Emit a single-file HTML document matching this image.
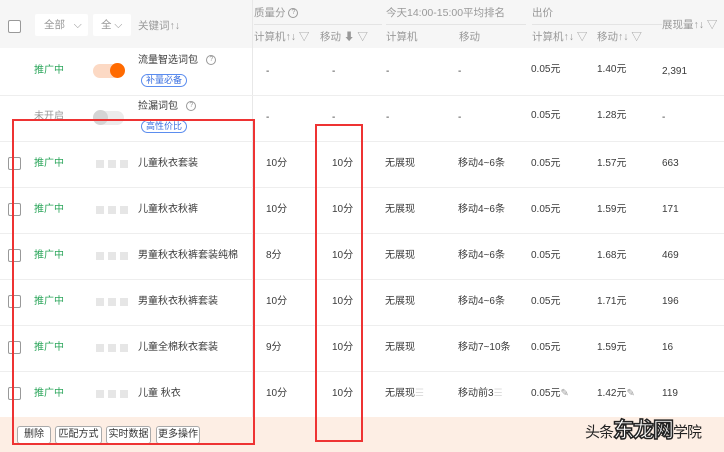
<!DOCTYPE html>
<html><head><meta charset="utf-8"><style>
*{margin:0;padding:0;box-sizing:border-box}
body{width:724px;height:452px;overflow:hidden;background:#fff;font-family:"Liberation Sans","Noto Sans CJK SC",sans-serif;font-size:10px;color:#3a3a3a;position:relative}
.a{position:absolute;white-space:nowrap;line-height:14px}
.g{color:#999}
.h{font-size:10.5px}
.gr{color:#2aa55a}
.hl{position:absolute;left:0;width:724px;height:1px;background:#eee}
.cb{position:absolute;width:13px;height:13px;border:1px solid #999;border-radius:2px;background:#fff}
.sq{position:absolute;width:8px;height:8px;background:#e6e6e6}
.tag{position:absolute;height:13px;border:1px solid #5b8def;border-radius:7px;color:#3a6fe0;font-size:9px;line-height:11px;padding:0 4px}
.btn{position:absolute;top:426px;height:18px;border:1px solid #aaa;border-radius:3px;background:#fff;font-size:10px;line-height:16px;text-align:center;color:#333}
.q{display:inline-block;width:10px;height:10px;border:1px solid #999;border-radius:50%;font-size:7px;line-height:8px;text-align:center;color:#999;vertical-align:middle}
.rb{position:absolute;border:2px solid #ee3333}
</style></head><body>
<div style="position:absolute;left:0;top:0;width:724px;height:48px;background:#f6f6f6"></div>
<div style="position:absolute;left:252px;top:0;width:1px;height:452px;background:#e8e8e8"></div>
<div style="position:absolute;left:254px;top:24px;width:128px;height:1px;background:#e4e4e4"></div>
<div style="position:absolute;left:386px;top:24px;width:140px;height:1px;background:#e4e4e4"></div>
<div style="position:absolute;left:532px;top:24px;width:130px;height:1px;background:#e4e4e4"></div>

<div class="cb" style="left:8px;top:20px;width:13px;height:13px"></div>
<div style="position:absolute;left:35px;top:14px;width:53px;height:22px;background:#fff;border-radius:2px"></div>
<div class="a g h" style="left:44px;top:18px">全部 &nbsp;&nbsp;⌵</div>
<div style="position:absolute;left:93px;top:14px;width:38px;height:22px;background:#fff;border-radius:2px"></div>
<div class="a g h" style="left:101px;top:18px">全 ⌵</div>
<div class="a g h" style="left:138px;top:19px">关键词↑↓</div>
<div class="a g h" style="left:254px;top:6px">质量分 <span class="q">?</span></div>
<div class="a g h" style="left:254px;top:30px">计算机↑↓ ▽</div>
<div class="a g h" style="left:320px;top:30px">移动 ⬇ ▽</div>
<div class="a g h" style="left:386px;top:6px">今天14:00-15:00平均排名</div>
<div class="a g h" style="left:386px;top:30px">计算机</div>
<div class="a g h" style="left:459px;top:30px">移动</div>
<div class="a g h" style="left:532px;top:6px">出价</div>
<div class="a g h" style="left:532px;top:30px">计算机↑↓ ▽</div>
<div class="a g h" style="left:597px;top:30px">移动↑↓ ▽</div>
<div class="a g h" style="left:662px;top:18px">展现量↑↓ ▽</div>

<!-- row 1 -->
<div class="a gr" style="left:34px;top:64px">推广中</div>
<div style="position:absolute;left:93px;top:64px;width:31px;height:14px;border-radius:7px;background:#fcd9c4"></div>
<div style="position:absolute;left:110px;top:63px;width:15px;height:15px;border-radius:50%;background:#ff6a00"></div>
<div class="a" style="left:138px;top:54px">流量智选词包 &nbsp;&nbsp;<span class="q">?</span></div>
<div class="tag" style="left:141px;top:74px">补量必备</div>
<div class="a" style="left:266px;top:65px">-</div><div class="a" style="left:332px;top:65px">-</div>
<div class="a" style="left:386px;top:65px">-</div><div class="a" style="left:458px;top:65px">-</div>
<div class="a" style="left:531px;top:63px">0.05元</div><div class="a" style="left:597px;top:63px">1.40元</div><div class="a" style="left:662px;top:65px">2,391</div>
<div class="hl" style="top:95px"></div>
<!-- row 2 -->
<div class="a g" style="left:34px;top:110px">未开启</div>
<div style="position:absolute;left:93px;top:111px;width:31px;height:14px;border-radius:7px;background:#ececec"></div>
<div style="position:absolute;left:93px;top:110px;width:15px;height:15px;border-radius:50%;background:#d4d4d4"></div>
<div class="a" style="left:138px;top:100px">捡漏词包 &nbsp;&nbsp;<span class="q">?</span></div>
<div class="tag" style="left:141px;top:120px">高性价比</div>
<div class="a" style="left:266px;top:111px">-</div><div class="a" style="left:332px;top:111px">-</div>
<div class="a" style="left:386px;top:111px">-</div><div class="a" style="left:458px;top:111px">-</div>
<div class="a" style="left:531px;top:109px">0.05元</div><div class="a" style="left:597px;top:109px">1.28元</div><div class="a" style="left:662px;top:111px">-</div>
<div class="hl" style="top:141px"></div>

<div class="cb" style="left:8px;top:157px"></div><div class="a gr" style="left:34px;top:157px">推广中</div>
<div class="sq" style="left:96px;top:160px"></div><div class="sq" style="left:108px;top:160px"></div><div class="sq" style="left:120px;top:160px"></div>
<div class="a" style="left:138px;top:157px">儿童秋衣套装</div><div class="a" style="left:266px;top:157px">10分</div><div class="a" style="left:332px;top:157px">10分</div>
<div class="a" style="left:385px;top:157px">无展现</div><div class="a" style="left:458px;top:157px">移动4~6条</div><div class="a" style="left:531px;top:157px">0.05元</div><div class="a" style="left:597px;top:157px">1.57元</div><div class="a" style="left:662px;top:157px">663</div>
<div class="hl" style="top:187px"></div>

<div class="cb" style="left:8px;top:203px"></div><div class="a gr" style="left:34px;top:203px">推广中</div>
<div class="sq" style="left:96px;top:206px"></div><div class="sq" style="left:108px;top:206px"></div><div class="sq" style="left:120px;top:206px"></div>
<div class="a" style="left:138px;top:203px">儿童秋衣秋裤</div><div class="a" style="left:266px;top:203px">10分</div><div class="a" style="left:332px;top:203px">10分</div>
<div class="a" style="left:385px;top:203px">无展现</div><div class="a" style="left:458px;top:203px">移动4~6条</div><div class="a" style="left:531px;top:203px">0.05元</div><div class="a" style="left:597px;top:203px">1.59元</div><div class="a" style="left:662px;top:203px">171</div>
<div class="hl" style="top:233px"></div>

<div class="cb" style="left:8px;top:249px"></div><div class="a gr" style="left:34px;top:249px">推广中</div>
<div class="sq" style="left:96px;top:252px"></div><div class="sq" style="left:108px;top:252px"></div><div class="sq" style="left:120px;top:252px"></div>
<div class="a" style="left:138px;top:249px">男童秋衣秋裤套装纯棉</div><div class="a" style="left:266px;top:249px">8分</div><div class="a" style="left:332px;top:249px">10分</div>
<div class="a" style="left:385px;top:249px">无展现</div><div class="a" style="left:458px;top:249px">移动4~6条</div><div class="a" style="left:531px;top:249px">0.05元</div><div class="a" style="left:597px;top:249px">1.68元</div><div class="a" style="left:662px;top:249px">469</div>
<div class="hl" style="top:279px"></div>

<div class="cb" style="left:8px;top:295px"></div><div class="a gr" style="left:34px;top:295px">推广中</div>
<div class="sq" style="left:96px;top:298px"></div><div class="sq" style="left:108px;top:298px"></div><div class="sq" style="left:120px;top:298px"></div>
<div class="a" style="left:138px;top:295px">男童秋衣秋裤套装</div><div class="a" style="left:266px;top:295px">10分</div><div class="a" style="left:332px;top:295px">10分</div>
<div class="a" style="left:385px;top:295px">无展现</div><div class="a" style="left:458px;top:295px">移动4~6条</div><div class="a" style="left:531px;top:295px">0.05元</div><div class="a" style="left:597px;top:295px">1.71元</div><div class="a" style="left:662px;top:295px">196</div>
<div class="hl" style="top:325px"></div>

<div class="cb" style="left:8px;top:341px"></div><div class="a gr" style="left:34px;top:341px">推广中</div>
<div class="sq" style="left:96px;top:344px"></div><div class="sq" style="left:108px;top:344px"></div><div class="sq" style="left:120px;top:344px"></div>
<div class="a" style="left:138px;top:341px">儿童全棉秋衣套装</div><div class="a" style="left:266px;top:341px">9分</div><div class="a" style="left:332px;top:341px">10分</div>
<div class="a" style="left:385px;top:341px">无展现</div><div class="a" style="left:458px;top:341px">移动7~10条</div><div class="a" style="left:531px;top:341px">0.05元</div><div class="a" style="left:597px;top:341px">1.59元</div><div class="a" style="left:662px;top:341px">16</div>
<div class="hl" style="top:371px"></div>

<div class="cb" style="left:8px;top:387px"></div><div class="a gr" style="left:34px;top:387px">推广中</div>
<div class="sq" style="left:96px;top:390px"></div><div class="sq" style="left:108px;top:390px"></div><div class="sq" style="left:120px;top:390px"></div>
<div class="a" style="left:138px;top:387px">儿童 秋衣</div><div class="a" style="left:266px;top:387px">10分</div><div class="a" style="left:332px;top:387px">10分</div>
<div class="a" style="left:385px;top:387px">无展现<span style="color:#ddd">☰</span></div><div class="a" style="left:458px;top:387px">移动前3<span style="color:#ddd">☰</span></div><div class="a" style="left:531px;top:387px">0.05元<span class="g">✎</span></div><div class="a" style="left:597px;top:387px">1.42元<span class="g">✎</span></div><div class="a" style="left:662px;top:387px">119</div>

<div style="position:absolute;left:0;top:417px;width:724px;height:35px;background:#fdeee4"></div>
<div class="btn" style="left:17px;width:34px">删除</div>
<div class="btn" style="left:55px;width:47px">匹配方式</div>
<div class="btn" style="left:106px;width:45px">实时数据</div>
<div class="btn" style="left:156px;width:44px">更多操作</div>
<div class="a" style="left:585px;top:418px;font-size:15px;line-height:26px;color:#222;letter-spacing:-1px">头条<span style="font-size:21px;font-weight:bold;color:#fff;-webkit-text-stroke:1.5px #222">东龙网</span>学院</div>

<div class="rb" style="left:12px;top:119px;width:243px;height:326px"></div>
<div class="rb" style="left:315px;top:124px;width:48px;height:318px"></div>
</body></html>
